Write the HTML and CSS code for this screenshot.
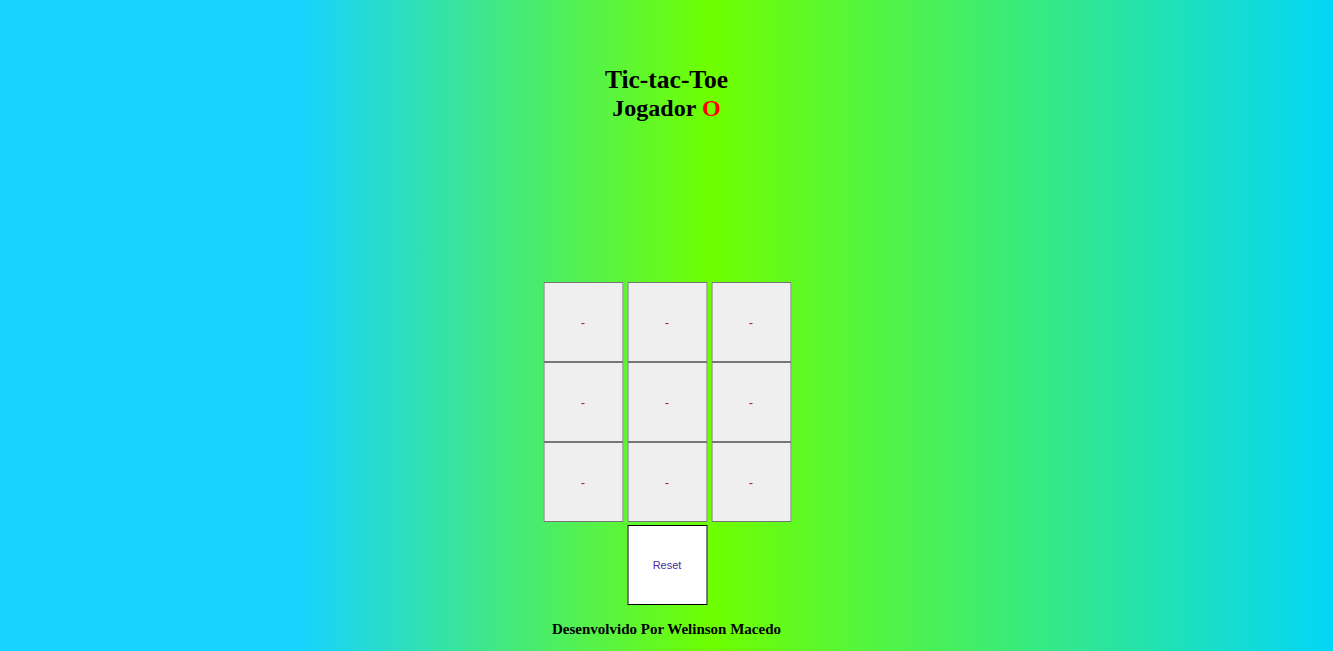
FILE: index.html
```html
<!DOCTYPE html>
<html lang="pt">
<head>
<meta charset="utf-8">
<title>Tic-tac-Toe</title>
<link rel="stylesheet" href="styles.css">
</head>
<body>
<main class="page">
  <header class="heading">
    <h1 class="title">Tic-tac-Toe</h1>
    <h2 class="player">Jogador <span class="mark">O</span></h2>
  </header>
  <section class="board">
    <button class="cell">-</button>
    <button class="cell">-</button>
    <button class="cell">-</button>
    <button class="cell">-</button>
    <button class="cell">-</button>
    <button class="cell">-</button>
    <button class="cell">-</button>
    <button class="cell">-</button>
    <button class="cell">-</button>
  </section>
  <button class="reset">Reset</button>
  <footer class="credit">Desenvolvido Por Welinson Macedo</footer>
</main>
</body>
</html>
```
FILE: styles.css
```css
html, body {
  margin: 0;
  padding: 0;
}
body {
  min-height: 651px;
  background: linear-gradient(to right, #16d3ff 0%, #16d3ff 22.5%, #6fff00 53.3%, #03d6f8 100%);
  font-family: "Liberation Serif", "Times New Roman", serif;
  color: #000;
}
.page {
  display: flex;
  flex-direction: column;
  align-items: center;
  padding-top: 65px;
}
.heading {
  display: flex;
  flex-direction: column;
  align-items: center;
}
.title {
  margin: 0;
  font-size: 25.5px;
  line-height: 29px;
  font-weight: bold;
}
.player {
  margin: 0;
  font-size: 24px;
  line-height: 28px;
  font-weight: bold;
}
.mark {
  color: #ff0000;
}
.board {
  margin-top: 160px;
  display: grid;
  grid-template-columns: repeat(3, 80px);
  grid-auto-rows: 80px;
  column-gap: 4px;
  row-gap: 0;
  transform: translateX(0.5px);
}
.cell {
  width: 80px;
  height: 80px;
  margin: 0;
  padding: 0;
  background: #efefef;
  border: 1px solid #767676;
  border-radius: 0;
  font-family: "Liberation Sans", Arial, sans-serif;
  font-size: 13px;
  color: #b02020;
}
.reset {
  margin-top: 3px;
  width: 80px;
  height: 80px;
  padding: 0;
  background: #ffffff;
  border: 1px solid #000;
  border-radius: 0;
  font-family: "Liberation Sans", Arial, sans-serif;
  font-size: 11px;
  color: #4b2a9a;
  transform: translateX(0.5px);
}
.credit {
  margin-top: 16px;
  font-size: 15px;
  line-height: 17px;
  font-weight: bold;
}
```
